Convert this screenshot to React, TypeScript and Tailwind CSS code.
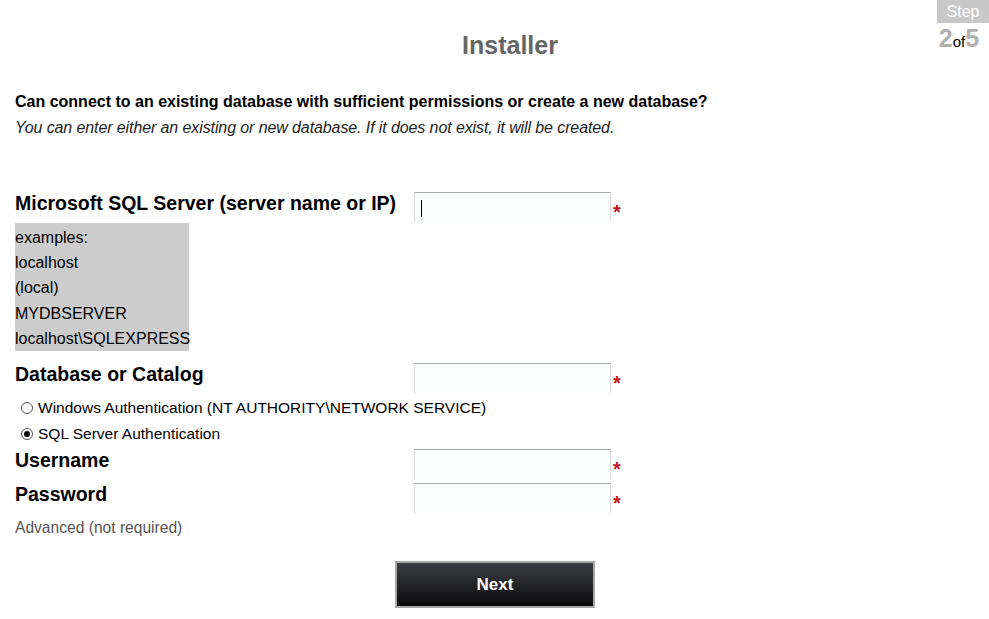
import React from "react";

const font = { fontFamily: '"Liberation Sans", Arial, sans-serif' };

function Field({ label, cursor }: { label: string; cursor?: boolean }) {
  return (
    <div className="flex items-start">
      <div className="w-[399px] text-[19.5px] font-bold leading-[22px] text-black">{label}</div>
      <div className="relative h-[30px] w-[197px] border-t border-l border-r border-t-[#a9a9a9] border-l-[#dcdcdc] border-r-[#dcdcdc] bg-[#fcfdfd]">
        {cursor && <div className="absolute left-[6px] top-[7px] h-[17px] w-px bg-black" />}
      </div>
      <span className="ml-[2px] mt-[10px] text-[20px] font-bold leading-[20px] text-[#c0161b]">*</span>
    </div>
  );
}

function Radio({ checked, label }: { checked?: boolean; label: string }) {
  return (
    <div className="flex items-center gap-[5px] pl-[6px] text-[15.5px] leading-[26px] text-black">
      <span className="flex h-[12px] w-[12px] items-center justify-center rounded-full border border-[#555] bg-white">
        {checked && <span className="h-[6px] w-[6px] rounded-full bg-black" />}
      </span>
      {label}
    </div>
  );
}

export default function App() {
  return (
    <div className="relative h-[619px] w-[989px] overflow-hidden bg-white" style={font}>
      <div className="absolute right-0 top-0 flex w-[52px] flex-col items-center">
        <div className="w-full bg-[#c8c8c8] py-[2px] text-center text-[16px] leading-[19px] text-white">Step</div>
        <div className="-ml-[8px] flex items-baseline font-bold text-[#b0b0b0]">
          <span className="text-[25px] leading-[30px]">2</span>
          <span className="text-[15px] font-normal text-black">of</span>
          <span className="text-[25px] leading-[30px]">5</span>
        </div>
      </div>

      <h1 className="pt-[30px] text-center text-[25px] font-bold leading-[30px] text-[#666]">
        <span className="ml-[31px]">Installer</span>
      </h1>

      <div className="px-[15px] pt-[29px]">
        <p className="text-[16px] font-bold leading-[26px] text-black">
          Can connect to an existing database with sufficient permissions or create a new database?
        </p>
        <p className="text-[16px] italic leading-[26px] tracking-[-0.1px] text-[#222]">
          You can enter either an existing or new database. If it does not exist, it will be created.
        </p>

        <div className="mt-[51px]">
          <Field label="Microsoft SQL Server (server name or IP)" cursor />
        </div>
        <div className="mt-[1px] w-[174px] bg-[#cccccc] pt-[2px] text-[16px] leading-[25.2px] text-black">
          <div>examples:</div>
          <div>localhost</div>
          <div>(local)</div>
          <div>MYDBSERVER</div>
          <div>localhost\SQLEXPRESS</div>
        </div>

        <div className="mt-[12px]">
          <Field label="Database or Catalog" />
        </div>
        <div className="mt-[2px]">
          <Radio label="Windows Authentication (NT AUTHORITY\NETWORK SERVICE)" />
          <Radio checked label="SQL Server Authentication" />
        </div>
        <div className="mt-[2px]">
          <Field label="Username" />
        </div>
        <div className="mt-[4px]">
          <Field label="Password" />
        </div>
        <div className="mt-[4px] text-[15.6px] leading-[22px] text-[#555]">Advanced (not required)</div>

        <div className="mt-[22px] flex justify-center">
          <button className="ml-[1px] h-[47px] w-[200px] border-2 border-[#a8a8a8] bg-gradient-to-b from-[#3e3f44] to-[#0c0c0d] text-[17px] font-bold text-white">
            Next
          </button>
        </div>
      </div>
    </div>
  );
}
